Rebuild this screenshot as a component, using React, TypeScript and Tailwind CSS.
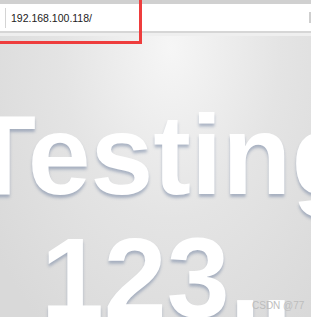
export default function App() {
  return (
    <div className="relative h-[317px] w-[311px] overflow-hidden bg-[radial-gradient(ellipse_at_55%_15%,#f6f6f6_0%,#e4e4e4_45%,#d9d9d9_90%)] font-['Liberation_Sans',Arial,sans-serif]">
      {/* browser address bar */}
      <div className="border-t-4 border-[#d0d0d0] bg-white">
        <div className="flex h-[27px] items-center">
          <div className="ml-[5px] h-[20px] w-px bg-[#d4d4d4]" />
          <span className="ml-[5px] pt-[2px] text-[10.5px] text-[#222]">192.168.100.118/</span>
          <div className="ml-auto h-[11px] w-[2px] bg-[#cfcfcf]" />
        </div>
      </div>
      <div className="h-[2px] bg-[#d6d6d6]" />
      <div className="h-[3px] bg-[#efefef]" />

      {/* page heading */}
      <div className="mt-[58px] whitespace-nowrap text-[113px] font-bold leading-[123px] text-white [text-shadow:0_3px_3px_rgba(95,115,150,0.45)]">
        <div className="-ml-[33px]">Testing</div>
        <div className="ml-[41px]">123..</div>
      </div>

      {/* screenshot annotation */}
      <div className="absolute -left-[10px] -top-[10px] h-[54px] w-[152px] border-[3px] border-[#ee3d3d]" />
      <div className="absolute left-[252px] top-[298px] text-[10px] text-[#bdbdbd]">CSDN @77</div>
    </div>
  );
}
